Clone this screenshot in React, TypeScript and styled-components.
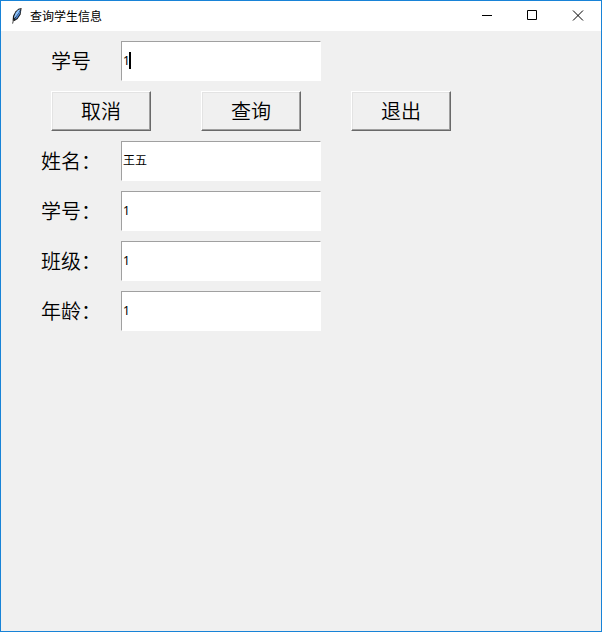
import React from "react";
import styled, { createGlobalStyle } from "styled-components";

const GlobalStyle = createGlobalStyle`
  *, *::before, *::after { box-sizing: border-box; }
  body {
    margin: 0;
    background: #f0f0f0;
    color: #000;
    font-family: "Noto Sans CJK SC", "Noto Sans", sans-serif;
  }
`;

const Window = styled.div`
  display: flex;
  flex-direction: column;
  min-height: 100vh;
  border: 1px solid #1883d7;
  background: #f0f0f0;
`;

const TitleBar = styled.header`
  display: flex;
  align-items: center;
  height: 30px;
  padding-left: 8px;
  background: #fff;
`;

const Title = styled.h1`
  flex: 1;
  margin: 0 0 0 5px;
  font-size: 12px;
  font-weight: 400;
  line-height: 30px;
`;

const WindowButton = styled.button<{ $wide?: boolean }>`
  display: flex;
  align-items: center;
  justify-content: center;
  width: ${(p) => (p.$wide ? 46 : 45)}px;
  height: 30px;
  padding: 0 0 2px;
  border: 0;
  background: transparent;

  &:hover { background: #e5e5e5; }
`;

const Form = styled.form`
  display: flex;
  flex-direction: column;
  gap: 10px;
  padding: 10px 0;
`;

const Row = styled.div`
  display: grid;
  grid-template-columns: 120px minmax(0, 200px);
  align-items: center;
`;

const Label = styled.label<{ $indent: number }>`
  padding-left: ${(p) => p.$indent}px;
  font-size: 20px;
  font-weight: 350;
  line-height: 40px;
  white-space: nowrap;
`;

const Field = styled.div`
  position: relative;
`;

const Entry = styled.input`
  display: block;
  width: 100%;
  height: 40px;
  padding: 0 1px 2px;
  border: 1px solid #fff;
  border-top-color: #a0a0a0;
  border-left-color: #a0a0a0;
  border-radius: 0;
  outline: 0;
  background: #fff;
  color: #000;
  caret-color: transparent;
  font-family: "Noto Sans", "Noto Sans CJK SC", sans-serif;
  font-size: 12px;
`;

const Caret = styled.span`
  position: absolute;
  top: 11px;
  left: 8px;
  width: 2px;
  height: 17px;
  background: #000;
`;

const Actions = styled.div`
  display: flex;
  gap: 50px;
  padding-left: 50px;
`;

const ActionButton = styled.button`
  width: 100px;
  height: 40px;
  padding: 0;
  border: 1px solid;
  border-color: #fff #696969 #696969 #fff;
  border-radius: 0;
  box-shadow: inset -1px -1px 0 #a0a0a0, inset 1px 1px 0 #e3e3e3;
  background: #f0f0f0;
  color: #000;
  font-family: inherit;
  font-size: 20px;
  font-weight: 350;
  line-height: 36px;
`;

const FeatherIcon = () => (
  <svg width="16" height="16" viewBox="0 0 16 16" aria-hidden="true">
    <path d="M12.6 0 9.4 0.8 6.4 3.6 4 8 3.6 12.6 5.5 13 8.6 11 11.6 6.5Z" fill="#161616" />
    <path d="M11.6 1 9 2 6.8 4.6 5.2 8.4 5 10.6 7 8.4 9.6 5Z" fill="#8cc0f8" />
    <path d="M11.7 2 10.8 6 8.2 10 5.6 11.8 7.4 8.6 9.8 5Z" fill="#4a86d6" />
    <path d="M4.6 11.5 3.6 15.6" stroke="#444" strokeWidth="1" fill="none" />
  </svg>
);

const records = [
  { id: "name", label: "姓名：", value: "王五" },
  { id: "number", label: "学号：", value: "1" },
  { id: "class", label: "班级：", value: "1" },
  { id: "age", label: "年龄：", value: "1" },
];

export default function App() {
  return (
    <>
      <GlobalStyle />
      <Window>
        <TitleBar>
          <FeatherIcon />
          <Title>查询学生信息</Title>
          <WindowButton type="button" aria-label="最小化">
            <svg width="11" height="11" viewBox="0 0 11 11">
              <path d="M0 5.5H10" stroke="#000" />
            </svg>
          </WindowButton>
          <WindowButton type="button" aria-label="最大化">
            <svg width="11" height="11" viewBox="0 0 11 11">
              <path d="M0.5 0.5H9.5V9.5H0.5Z" stroke="#000" fill="none" />
            </svg>
          </WindowButton>
          <WindowButton type="button" aria-label="关闭" $wide>
            <svg width="12" height="11" viewBox="0 0 12 11">
              <path d="M1 0.5 11 10.5M11 0.5 1 10.5" stroke="#000" strokeWidth="1" />
            </svg>
          </WindowButton>
        </TitleBar>
        <Form onSubmit={(e) => e.preventDefault()}>
          <Row>
            <Label htmlFor="query" $indent={50}>学号</Label>
            <Field>
              <Entry id="query" type="text" defaultValue="1" />
              <Caret />
            </Field>
          </Row>
          <Actions>
            <ActionButton type="reset">取消</ActionButton>
            <ActionButton type="submit">查询</ActionButton>
            <ActionButton type="button">退出</ActionButton>
          </Actions>
          {records.map((r) => (
            <Row key={r.id}>
              <Label htmlFor={r.id} $indent={40}>{r.label}</Label>
              <Entry id={r.id} type="text" defaultValue={r.value} />
            </Row>
          ))}
        </Form>
      </Window>
    </>
  );
}
